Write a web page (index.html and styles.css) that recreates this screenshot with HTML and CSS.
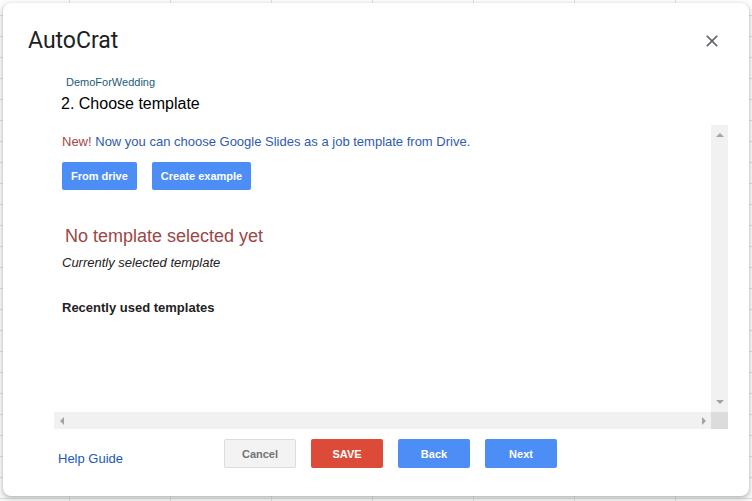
FILE: index.html
```html
<!DOCTYPE html>
<html lang="en">
<head>
    <meta charset="UTF-8">
    <meta name="viewport" content="width=device-width, initial-scale=1.0">
    <title>AutoCrat</title>
    <link rel="stylesheet" href="styles.css">
</head>
<body>
    <div class="dialog">
        <div class="dialog-header">
            <h1 class="dialog-title">AutoCrat</h1>
            <button class="close-btn" aria-label="Close">
                <svg width="20" height="20" viewBox="0 0 24 24">
                    <path d="M19 6.41L17.59 5 12 10.59 6.41 5 5 6.41 10.59 12 5 17.59 6.41 19 12 13.41 17.59 19 19 17.59 13.41 12z" fill="#5f6368"/>
                </svg>
            </button>
        </div>

        <div class="job-info">
            <div class="job-name">DemoForWedding</div>
            <h2 class="step-title">2. Choose template</h2>
        </div>

        <div class="scroll-frame">
            <div class="scroll-content">
                <p class="notice"><span class="notice-new">New!</span> Now you can choose Google Slides as a job template from Drive.</p>
                <div class="template-actions">
                    <button class="btn btn-blue">From drive</button>
                    <button class="btn btn-blue">Create example</button>
                </div>
                <p class="no-template">No template selected yet</p>
                <p class="current-label">Currently selected template</p>
                <p class="recent-label">Recently used templates</p>
            </div>
            <div class="vscroll">
                <span class="arrow arrow-up"></span>
                <span class="arrow arrow-down"></span>
            </div>
            <div class="hscroll">
                <span class="arrow arrow-left"></span>
                <span class="arrow arrow-right"></span>
            </div>
            <div class="scroll-corner"></div>
        </div>

        <div class="dialog-footer">
            <a class="help-link" href="#">Help Guide</a>
            <div class="footer-buttons">
                <button class="btn btn-footer btn-grey">Cancel</button>
                <button class="btn btn-footer btn-red">SAVE</button>
                <button class="btn btn-footer btn-blue">Back</button>
                <button class="btn btn-footer btn-blue">Next</button>
            </div>
        </div>
    </div>
</body>
</html>
```

FILE: styles.css
```css
html, body {
    height: 501px;
}

body {
    margin: 0;
    overflow: hidden;
    font-family: "Liberation Sans", Arial, sans-serif;
    background-color: #ffffff;
    /* spreadsheet grid behind the dialog */
    background-image:
        linear-gradient(to right, transparent 100px, #e2e3e3 100px),
        linear-gradient(to bottom, transparent 20px, #e2e3e3 20px);
    background-size: 101px 100%, 100% 21px;
    background-position: -31px 0, 0 -5px;
}

.dialog {
    box-sizing: border-box;
    width: 746px;
    height: 493px;
    margin: 3px;
    background-color: #ffffff;
    border-radius: 8px;
    box-shadow: 0 1px 3px rgba(60, 64, 67, 0.3), 0 4px 8px 3px rgba(60, 64, 67, 0.15);
    display: flex;
    flex-direction: column;
}

.dialog-header {
    display: flex;
    justify-content: space-between;
    align-items: center;
    padding: 24px 27px 0 25px;
}

.dialog-title {
    margin: 0;
    font-family: Roboto, "Liberation Sans", sans-serif;
    font-weight: 400;
    font-size: 23px;
    line-height: 28px;
    color: #202124;
}

.close-btn {
    border: none;
    background: none;
    padding: 0;
    display: block;
    cursor: pointer;
}

.close-btn svg {
    display: block;
}

.job-info {
    margin-top: 21px;
    padding-left: 58px;
}

.job-name {
    padding-left: 5px;
    font-size: 11px;
    line-height: 13px;
    color: #1d5b79;
}

.step-title {
    margin: 5px 0 0;
    font-size: 16px;
    line-height: 19px;
    font-weight: 400;
    color: #000000;
}

.scroll-frame {
    margin: 12px 0 0 51px;
    width: 674px;
    height: 304px;
    display: grid;
    grid-template-columns: 1fr 17px;
    grid-template-rows: 1fr 17px;
}

.scroll-content {
    padding: 9px 8px;
    overflow: hidden;
}

.scroll-content p {
    margin: 0;
}

.notice {
    font-size: 13px;
    line-height: 16px;
    color: #2f5bb0;
}

.notice-new {
    color: #a14848;
}

.template-actions {
    display: flex;
    gap: 15px;
    margin-top: 12px;
}

.btn {
    font-family: "Liberation Sans", Arial, sans-serif;
    font-size: 11px;
    font-weight: bold;
    height: 28px;
    padding: 0 9px;
    border: none;
    border-radius: 2px;
    cursor: pointer;
}

.btn-blue {
    background-color: #4d8ef6;
    color: #ffffff;
}

.btn-red {
    background-color: #dc4a38;
    color: #ffffff;
}

.btn-grey {
    background-color: #f3f3f3;
    border: 1px solid #dcdcdc;
    color: #737373;
}

.no-template {
    margin-top: 35px !important;
    padding-left: 3px;
    font-size: 18px;
    line-height: 22px;
    color: #9c4646;
}

.current-label {
    margin-top: 8px !important;
    font-size: 13px;
    line-height: 16px;
    font-style: italic;
    color: #222222;
}

.recent-label {
    margin-top: 29px !important;
    font-size: 13px;
    line-height: 16px;
    font-weight: bold;
    color: #222222;
}

.vscroll {
    background-color: #f1f1f1;
    display: flex;
    flex-direction: column;
    justify-content: space-between;
    align-items: center;
    padding: 8px 0 8px;
}

.hscroll {
    background-color: #f1f1f1;
    display: flex;
    justify-content: space-between;
    align-items: center;
    padding: 0 5px 0 6px;
}

.scroll-corner {
    background-color: #dcdcdc;
}

.arrow {
    width: 0;
    height: 0;
    display: block;
}

.arrow-up {
    border-left: 4px solid transparent;
    border-right: 4px solid transparent;
    border-bottom: 4px solid #a3a3a3;
}

.arrow-down {
    border-left: 4px solid transparent;
    border-right: 4px solid transparent;
    border-top: 4px solid #a3a3a3;
}

.arrow-left {
    border-top: 4px solid transparent;
    border-bottom: 4px solid transparent;
    border-right: 4px solid #a3a3a3;
}

.arrow-right {
    border-top: 4px solid transparent;
    border-bottom: 4px solid transparent;
    border-left: 4px solid #a3a3a3;
}

.dialog-footer {
    display: flex;
    align-items: flex-start;
    margin-top: 10px;
    padding-left: 55px;
}

.help-link {
    width: 166px;
    margin-top: 12px;
    font-size: 13px;
    line-height: 16px;
    color: #2158b6;
    text-decoration: none;
}

.footer-buttons {
    display: flex;
    gap: 15px;
}

.btn-footer {
    width: 72px;
    height: 29px;
    padding: 0;
}
```
